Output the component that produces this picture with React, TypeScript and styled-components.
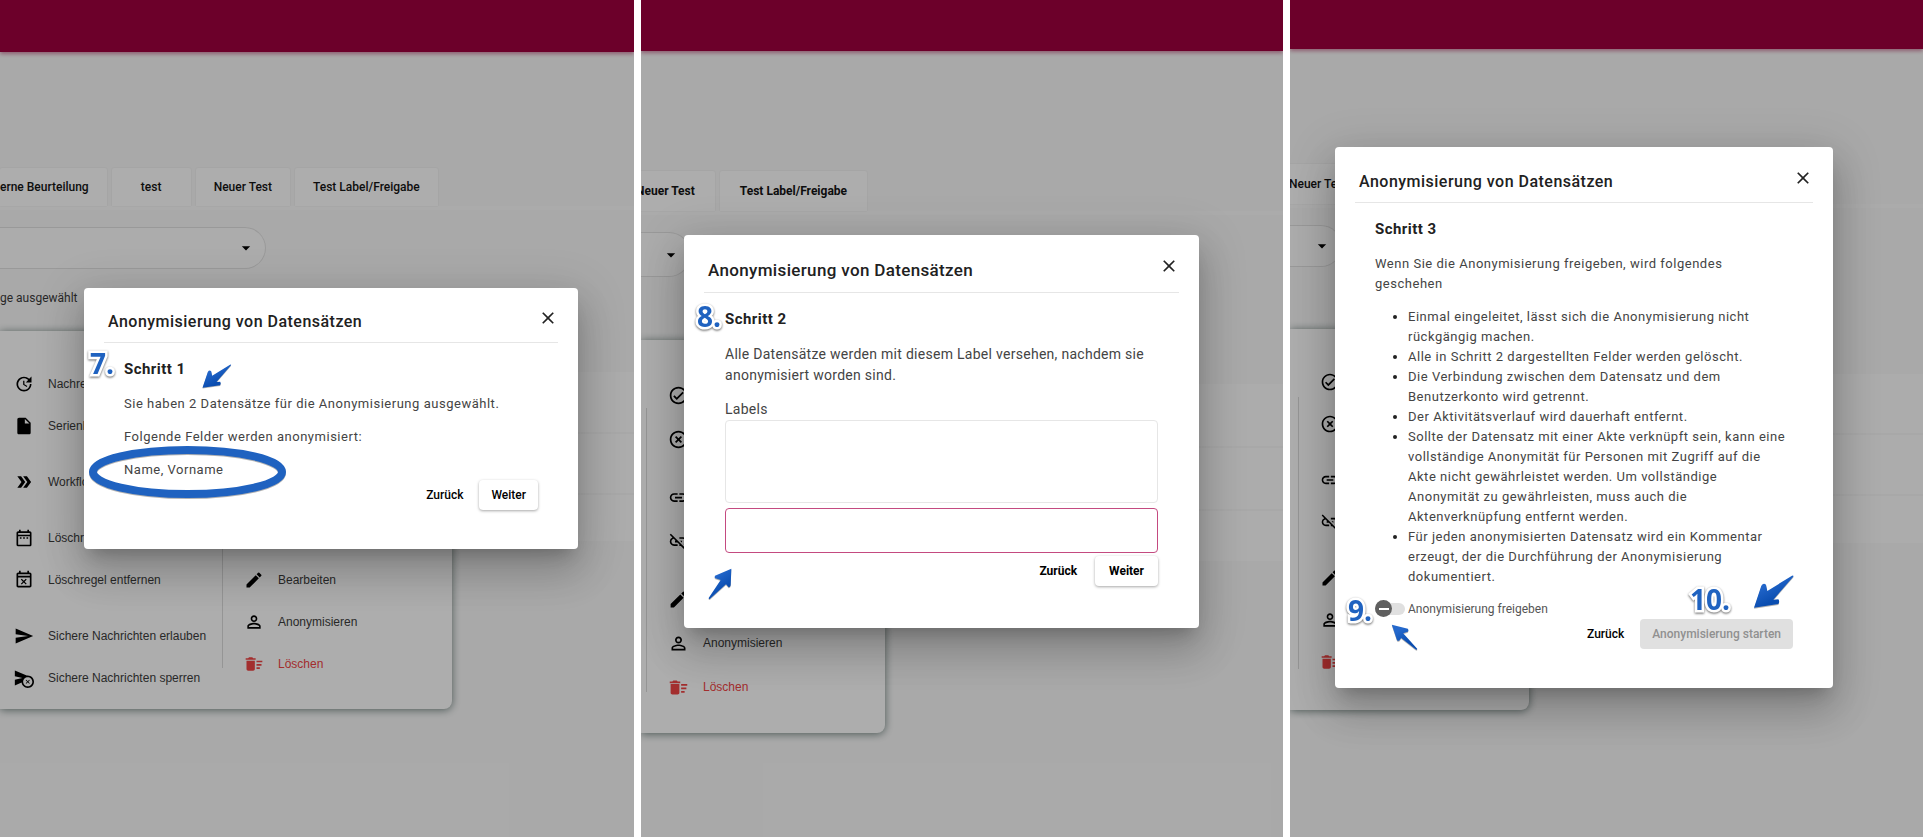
import React from "react";
import styled, { createGlobalStyle, css, ThemeProvider } from "styled-components";
import {
  MdArrowDropDown,
  MdCancelScheduleSend,
  MdClose,
  MdDeleteSweep,
  MdDoubleArrow,
  MdEdit,
  MdHighlightOff,
  MdInsertDriveFile,
  MdInsertLink,
  MdLinkOff,
  MdOutlineCheckCircle,
  MdOutlineDateRange,
  MdOutlineEventBusy,
  MdPersonOutline,
  MdSend,
  MdUpdate,
} from "react-icons/md";

/* Measures that differ between the three views */
type Metrics = {
  header: number;
  tabsTop: number;
  tabHeight: number;
  tabPad: number;
  filterHeight: number;
  filterWidth: number;
  tableGap: number;
  rowHeights: number[];
  menuTop: number;
  menuWidth: number;
  menuPad: number;
  menuItem: number;
  menuBottom: number;
  icon: number;
  body: number;
  tracking: string;
  line: number;
  title: number;
  titleTracking: string;
  titlePad: number;
  bodyPad: number;
  actionPad: number;
  weight: number;
  dialogTop: number;
  dialogLeft: number;
  dialogRight: number;
  dialogBottom: number;
  titleBar: number;
};

const first: Metrics = {
  header: 52, tabsTop: 116, tabHeight: 38, tabPad: 18, filterHeight: 42, filterWidth: 266, tableGap: 64,
  rowHeights: [60, 61, 48], menuTop: 331, menuWidth: 452, menuPad: 32, menuItem: 42, menuBottom: 10,
  icon: 20, body: 13, tracking: "0.04em", line: 20, title: 16, titleTracking: "0.03em", titlePad: 9,
  bodyPad: 20, actionPad: 12, weight: 500,
  dialogTop: 288, dialogLeft: 84, dialogRight: 56, dialogBottom: 39, titleBar: 55,
};

const second: Metrics = {
  header: 51, tabsTop: 120, tabHeight: 40, tabPad: 20, filterHeight: 45, filterWidth: 50, tableGap: 68,
  rowHeights: [62, 63, 52], menuTop: 340, menuWidth: 244, menuPad: 33, menuItem: 44, menuBottom: 10,
  icon: 21, body: 14, tracking: "0.02em", line: 21, title: 17, titleTracking: "0.02em", titlePad: 11,
  bodyPad: 21, actionPad: 14, weight: 700,
  dialogTop: 235, dialogLeft: 43, dialogRight: 84, dialogBottom: 42, titleBar: 58,
};

const third: Metrics = {
  ...first,
  header: 49, tabsTop: 115, tabHeight: 40, tabPad: 20, filterWidth: 52, tableGap: 68, rowHeights: [59, 61, 49],
  menuTop: 329, menuWidth: 239, menuBottom: 13,
  dialogTop: 147, dialogLeft: 45, dialogRight: 90, titleBar: 56,
};

const m = (key: keyof Metrics) => ({ theme }: { theme: any }) => `${theme[key]}px`;
const raw = (key: keyof Metrics) => ({ theme }: { theme: any }) => theme[key];

const GlobalStyle = createGlobalStyle`
  * { box-sizing: border-box; }
  body { margin: 0; background: #fff; font-family: Roboto, "Liberation Sans", sans-serif; }
  button, input, select, textarea { font-family: inherit; }
`;

const Board = styled.main`
  display: grid;
  grid-template-columns: 634fr 642fr 633fr;
  gap: 7px;
  min-height: 100vh;
`;

const Panel = styled.section`
  position: relative;
  overflow: hidden;
  min-width: 0;
  background: #fafafa;
`;

const Header = styled.header`
  height: ${m("header")};
  background: #a0003f;
  box-shadow: 0 2px 4px rgba(160, 0, 63, 0.45);
`;

const Tabs = styled.nav<{ $shift: number }>`
  display: flex;
  gap: 5px;
  margin-top: ${m("tabsTop")};
  border-bottom: 4px solid #fdfdfd;
  & > :first-child { margin-left: ${(p) => p.$shift}px; }
`;

const Tab = styled.button<{ $cut?: boolean }>`
  flex: none;
  min-width: 79px;
  height: ${m("tabHeight")};
  padding: 0 ${m("tabPad")};
  ${(p) => p.$cut && "padding-left: 0;"}
  border: 0;
  border-radius: 2px 2px 0 0;
  background: #fff;
  box-shadow: 0 0 2px rgba(0, 0, 0, 0.1);
  color: #141414;
  font-size: 12px;
  font-weight: ${raw("weight")};
  white-space: nowrap;
`;

const Filter = styled.div`
  position: relative;
  display: flex;
  width: ${m("filterWidth")};
  margin-top: 17px;
  svg {
    position: absolute;
    top: 50%;
    right: 10px;
    margin-top: -10px;
    pointer-events: none;
  }
`;

const FilterSelect = styled.select`
  width: 100%;
  height: ${m("filterHeight")};
  appearance: none;
  border: 1px solid #e2e2e2;
  border-left: 0;
  border-radius: 0 22px 22px 0;
  background: #fefefe;
`;

const Count = styled.p`
  height: 20px;
  margin: 19px 0 0;
  color: #3c3c3c;
  font-size: 12px;
  line-height: 20px;
`;

const Rows = styled.div`
  display: flex;
  flex-direction: column;
  margin-top: ${m("tableGap")};
  background: #fefefe;
`;

const Row = styled.div<{ $height: number }>`
  height: ${(p) => p.$height}px;
  & + & { border-top: 2px solid #f8f8f8; }
`;

const Menu = styled.aside`
  position: absolute;
  top: ${m("menuTop")};
  left: 0;
  display: flex;
  width: ${m("menuWidth")};
  border-radius: 0 8px 8px 0;
  background: #fff;
  box-shadow: 0 1px 8px rgba(20, 50, 45, 0.6);
`;

const MenuList = styled.ul<{ $width: number; $end?: boolean }>`
  display: flex;
  flex: ${(p) => (p.$width ? `0 0 ${p.$width}px` : "1 1 0")};
  flex-direction: column;
  justify-content: ${(p) => (p.$end ? "flex-end" : "flex-start")};
  margin: 0;
  padding: ${m("menuPad")} 0 ${({ theme, $end }) => theme.menuBottom + ($end ? 14 : 0)}px ${(p) => (p.$end ? 21 : 14)}px;
  list-style: none;
`;

const MenuEntry = styled.li<{ $gap?: boolean }>`
  margin-top: ${(p) => (p.$gap ? 14 : 0)}px;
`;

const MenuButton = styled.button<{ $danger?: boolean }>`
  display: flex;
  align-items: center;
  gap: 14px;
  height: ${m("menuItem")};
  padding: 0;
  border: 0;
  background: none;
  color: ${(p) => (p.$danger ? "#f04444" : "#3c3c3c")};
  font-family: "Liberation Sans", sans-serif;
  font-size: 12px;
  white-space: nowrap;
  svg {
    width: ${m("icon")};
    height: ${m("icon")};
    color: ${(p) => (p.$danger ? "#f04444" : "#000")};
  }
`;

const Divider = styled.div<{ $inset?: number }>`
  flex: none;
  width: 1px;
  margin: 68px 0 41px ${(p) => p.$inset ?? 0}px;
  background: #dcdcdc;
`;

const Scrim = styled.div`
  position: absolute;
  inset: 0;
  background: rgba(0, 0, 0, 0.32);
`;

const Dialog = styled.section`
  position: absolute;
  top: ${m("dialogTop")};
  left: ${m("dialogLeft")};
  right: ${m("dialogRight")};
  padding: 0 20px ${m("dialogBottom")};
  border-radius: 4px;
  background: #fff;
  box-shadow:
    0 11px 15px -7px rgba(0, 0, 0, 0.2),
    0 24px 38px 3px rgba(0, 0, 0, 0.14),
    0 9px 46px 8px rgba(0, 0, 0, 0.12);
`;

const TitleBar = styled.header`
  display: flex;
  align-items: flex-end;
  justify-content: space-between;
  height: ${m("titleBar")};
  padding: 0 0 ${m("titlePad")} 4px;
  border-bottom: 1px solid #e6e6e6;
`;

const Title = styled.h2`
  margin: 0;
  color: #212121;
  font-size: ${m("title")};
  font-weight: 500;
  letter-spacing: ${raw("titleTracking")};
  line-height: 22px;
`;

const Close = styled.button`
  display: flex;
  margin-bottom: 5px;
  padding: 0;
  border: 0;
  background: none;
  color: #222;
`;

const Body = styled.div`
  padding: 16px ${m("bodyPad")} 0;
`;

const Step = styled.h3`
  margin: 0 0 15px;
  color: #212121;
  font-size: 15px;
  font-weight: 700;
  letter-spacing: 0.03em;
  line-height: 20px;
`;

const copy = css`
  color: #444;
  font-size: ${m("body")};
  letter-spacing: ${raw("tracking")};
  line-height: ${m("line")};
`;

const Text = styled.p`
  ${copy}
  margin: 0 0 13px;
  &:last-child { margin-bottom: 0; }
`;

const Points = styled.ul`
  ${copy}
  margin: 0 0 12px;
  padding: 0 4px 0 33px;
  li::marker { color: #222; }
`;

const FieldLabel = styled.label`
  ${copy}
  display: block;
`;

const LabelBox = styled.textarea`
  display: block;
  width: 100%;
  height: 83px;
  margin-bottom: 5px;
  border: 1px solid #e6e6e6;
  border-radius: 4px;
  resize: none;
`;

const LabelInput = styled.input`
  display: block;
  width: 100%;
  height: 45px;
  margin-bottom: 3px;
  border: 1px solid #c44a80;
  border-radius: 4px;
`;

const Release = styled.label`
  display: flex;
  align-items: center;
  gap: 3px;
  height: 20px;
  color: #555;
  font-size: 12px;
`;

const Switch = styled.input`
  position: relative;
  width: 30px;
  height: 12px;
  margin: 0;
  appearance: none;
  border-radius: 6px;
  background: #e0e0e0;
  &::before {
    content: "";
    position: absolute;
    top: -3px;
    left: 0;
    width: 17px;
    height: 17px;
    border-radius: 50%;
    background: linear-gradient(#fff, #fff) center / 10px 2px no-repeat #5f5f5f;
  }
`;

const Actions = styled.footer`
  display: flex;
  justify-content: flex-end;
  gap: 4px;
  padding: 0 ${m("bodyPad")};
`;

const Action = styled.button<{ $raised?: boolean }>`
  height: 30px;
  padding: 0 ${m("actionPad")};
  border: 0;
  border-radius: 4px;
  background: ${(p) => (p.$raised ? "#fff" : "none")};
  box-shadow: ${(p) => (p.$raised ? "0 1px 3px rgba(0, 0, 0, 0.35)" : "none")};
  color: #000;
  font-size: 12px;
  font-weight: ${raw("weight")};
  &:disabled {
    background: #e0e0e0;
    box-shadow: none;
    color: #909090;
  }
`;

/* Tutorial marks laid over the dialogs */
const Mark = styled.div<{ $x: number; $y: number }>`
  position: absolute;
  left: ${(p) => p.$x}px;
  top: ${(p) => p.$y}px;
  display: flex;
  pointer-events: none;
`;

const Digit = styled.span`
  color: #1f62c0;
  font-family: "Open Sans", sans-serif;
  font-size: 28px;
  font-weight: 700;
  line-height: 28px;
  paint-order: stroke fill;
  -webkit-text-stroke: 5px #fff;
  filter: drop-shadow(0 1px 1px rgba(0, 0, 0, 0.6));
`;

type ArrowProps = { id: string; w: number; h: number; box: string; d: string };
const Arrow = ({ id, w, h, box, d }: ArrowProps) => (
  <svg width={w} height={h} viewBox={box} overflow="visible" aria-hidden="true">
    <defs>
      <linearGradient id={id} x1="0" y1="0" x2="0.6" y2="1">
        <stop offset="0.3" stopColor="#2468cc" />
        <stop offset="0.8" stopColor="#0a4db0" />
      </linearGradient>
    </defs>
    <path d={d} transform="translate(0 3)" fill="#000" opacity="0.3" />
    <path d={d} fill={`url(#${id})`} />
  </svg>
);

const DOWN_LEFT = "M2 98L24 32Q30 23 38 29L42 48L116 2Q123 0 119 6L60 74L75 73Q80 79 75 87Z";
const UP_RIGHT = "M70 2L21 23Q18 28 22 31L38 36L2 90Q2 95 6 92L54 49L62 58Q67 58 68 52Z";
const UP_LEFT = "M2 2L50 14Q54 18 50 23L36 28L78 74Q79 79 73 76L30 42L24 50Q19 52 17 47Z";

type Item = { icon: React.ReactNode; label?: string; gap?: boolean; danger?: boolean };

const fileActions: Item[] = [
  { icon: <MdUpdate />, label: "Nachre" },
  { icon: <MdInsertDriveFile />, label: "Serienb" },
  { icon: <MdDoubleArrow />, label: "Workflo", gap: true },
  { icon: <MdOutlineDateRange />, label: "Löschr", gap: true },
  { icon: <MdOutlineEventBusy />, label: "Löschregel entfernen" },
  { icon: <MdSend />, label: "Sichere Nachrichten erlauben", gap: true },
  { icon: <MdCancelScheduleSend />, label: "Sichere Nachrichten sperren" },
];

const edit: Item = { icon: <MdEdit />, label: "Bearbeiten", gap: true };
const anonymize: Item = { icon: <MdPersonOutline />, label: "Anonymisieren" };
const remove: Item = { icon: <MdDeleteSweep />, label: "Löschen", danger: true };

const linkActions: Item[] = [
  { icon: <MdOutlineCheckCircle /> },
  { icon: <MdHighlightOff /> },
  { icon: <MdInsertLink />, gap: true },
  { icon: <MdLinkOff /> },
];

const iconOnly = (item: Item): Item => ({ ...item, label: undefined });

const MenuColumn = ({ items, width = 0, end }: { items: Item[]; width?: number; end?: boolean }) => (
  <MenuList $width={width} $end={end}>
    {items.map((item, i) => (
      <MenuEntry key={i} $gap={item.gap}>
        <MenuButton type="button" $danger={item.danger}>
          {item.icon}
          {item.label}
        </MenuButton>
      </MenuEntry>
    ))}
  </MenuList>
);

type ViewProps = {
  metrics: Metrics;
  shift: number;
  tabs: React.ReactNode;
  count?: string;
  menu: React.ReactNode;
  children: React.ReactNode;
};

const View = ({ metrics, shift, tabs, count, menu, children }: ViewProps) => (
  <ThemeProvider theme={metrics}>
    <Panel>
      <Header />
      <Tabs $shift={shift}>{tabs}</Tabs>
      <Filter>
        <FilterSelect aria-label="Auswahl" />
        <MdArrowDropDown size={20} />
      </Filter>
      <Count>{count}</Count>
      <Rows>
        {metrics.rowHeights.map((height, i) => (
          <Row key={i} $height={height} />
        ))}
      </Rows>
      <Menu>{menu}</Menu>
      <Scrim />
      <Dialog role="dialog">
        <TitleBar>
          <Title>Anonymisierung von Datensätzen</Title>
          <Close type="button" aria-label="Schließen">
            <MdClose size={20} />
          </Close>
        </TitleBar>
        {children}
      </Dialog>
    </Panel>
  </ThemeProvider>
);

export default function App() {
  return (
    <>
      <GlobalStyle />
      <Board>
        <View
          metrics={first}
          shift={0}
          count="ge ausgewählt"
          tabs={
            <>
              <Tab $cut>erne Beurteilung</Tab>
              <Tab>test</Tab>
              <Tab>Neuer Test</Tab>
              <Tab>Test Label/Freigabe</Tab>
            </>
          }
          menu={
            <>
              <MenuColumn items={fileActions} width={222} />
              <Divider />
              <MenuColumn items={[edit, anonymize, remove]} end />
            </>
          }
        >
          <Body>
            <Step>Schritt 1</Step>
            <Text>Sie haben 2 Datensätze für die Anonymisierung ausgewählt.</Text>
            <Text>Folgende Felder werden anonymisiert:</Text>
            <Text>Name, Vorname</Text>
          </Body>
          <Actions>
            <Action type="button">Zurück</Action>
            <Action type="button" $raised>Weiter</Action>
          </Actions>
          <Mark $x={6} $y={61}><Digit>7.</Digit></Mark>
          <Mark $x={118} $y={76}>
            <Arrow id="arrow-count" w={30} h={25} box="0 0 124 102" d={DOWN_LEFT} />
          </Mark>
          <Mark $x={5} $y={158}>
            <svg width="197" height="53" viewBox="0 0 197 53" overflow="visible" aria-hidden="true">
              <ellipse cx="98.5" cy="27" rx="94.5" ry="22" fill="none" stroke="#000" strokeOpacity="0.3" strokeWidth="8" />
              <ellipse cx="98.5" cy="26" rx="94.5" ry="22" fill="none" stroke="#1f62c0" strokeWidth="8" />
            </svg>
          </Mark>
        </View>

        <View
          metrics={second}
          shift={-25}
          tabs={
            <>
              <Tab>Neuer Test</Tab>
              <Tab>Test Label/Freigabe</Tab>
            </>
          }
          menu={
            <>
              <Divider $inset={5} />
              <MenuColumn items={[...linkActions, iconOnly(edit), anonymize, remove]} end />
            </>
          }
        >
          <Body>
            <Step>Schritt 2</Step>
            <Text>
              Alle Datensätze werden mit diesem Label versehen, nachdem sie anonymisiert worden sind.
            </Text>
            <FieldLabel htmlFor="label-list">Labels</FieldLabel>
            <LabelBox id="label-list" />
            <LabelInput type="text" aria-label="Labels" />
          </Body>
          <Actions>
            <Action type="button">Zurück</Action>
            <Action type="button" $raised>Weiter</Action>
          </Actions>
          <Mark $x={13} $y={67}><Digit>8.</Digit></Mark>
          <Mark $x={24} $y={333}>
            <Arrow id="arrow-label" w={24} h={32} box="0 0 72 96" d={UP_RIGHT} />
          </Mark>
        </View>

        <View
          metrics={third}
          shift={-21}
          tabs={<Tab>Neuer Test</Tab>}
          menu={
            <>
              <Divider $inset={8} />
              <MenuColumn items={[...linkActions, edit, anonymize, remove].map(iconOnly)} end />
            </>
          }
        >
          <Body>
            <Step>Schritt 3</Step>
            <Text>Wenn Sie die Anonymisierung freigeben, wird folgendes geschehen</Text>
            <Points>
              <li>Einmal eingeleitet, lässt sich die Anonymisierung nicht rückgängig machen.</li>
              <li>Alle in Schritt 2 dargestellten Felder werden gelöscht.</li>
              <li>Die Verbindung zwischen dem Datensatz und dem Benutzerkonto wird getrennt.</li>
              <li>Der Aktivitätsverlauf wird dauerhaft entfernt.</li>
              <li>
                Sollte der Datensatz mit einer Akte verknüpft sein, kann eine vollständige Anonymität für
                Personen mit Zugriff auf die Akte nicht gewährleistet werden. Um vollständige Anonymität zu
                gewährleisten, muss auch die Aktenverknüpfung entfernt werden.
              </li>
              <li>
                Für jeden anonymisierten Datensatz wird ein Kommentar erzeugt, der die Durchführung der
                Anonymisierung dokumentiert.
              </li>
            </Points>
            <Release>
              <Switch type="checkbox" role="switch" />
              Anonymisierung freigeben
            </Release>
          </Body>
          <Actions>
            <Action type="button">Zurück</Action>
            <Action type="button" disabled>Anonymisierung starten</Action>
          </Actions>
          <Mark $x={13} $y={449}><Digit>9.</Digit></Mark>
          <Mark $x={56} $y={477}>
            <Arrow id="arrow-switch" w={27} h={26} box="0 0 80 78" d={UP_LEFT} />
          </Mark>
          <Mark $x={355} $y={438}><Digit>10.</Digit></Mark>
          <Mark $x={418} $y={428}>
            <Arrow id="arrow-start" w={42} h={34} box="0 0 124 102" d={DOWN_LEFT} />
          </Mark>
        </View>
      </Board>
    </>
  );
}
